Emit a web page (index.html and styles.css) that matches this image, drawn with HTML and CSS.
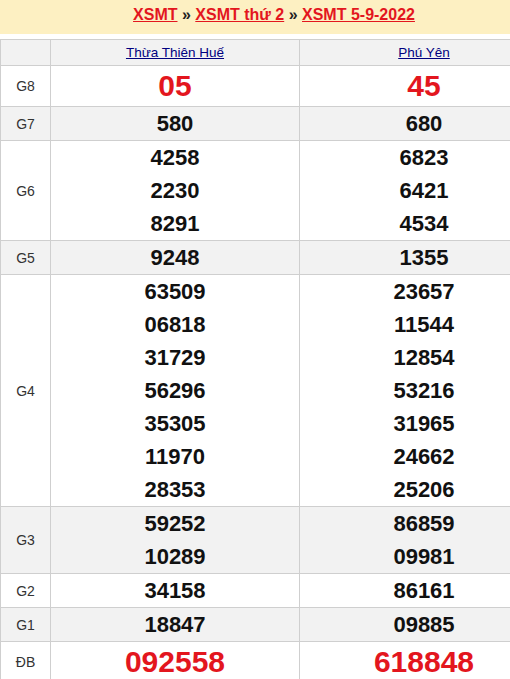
FILE: index.html
```html
<!DOCTYPE html>
<html lang="vi">
<head>
<meta charset="utf-8">
<link rel="stylesheet" href="styles.css">
</head>
<body>
<div class="page">
  <div class="crumbs">
    <a href="#">XSMT</a> » <a href="#">XSMT thứ 2</a> » <a href="#">XSMT 5-9-2022</a>
  </div>
  <table class="kq">
    <colgroup><col class="c-lbl"><col class="c-prov"><col class="c-prov"></colgroup>
    <thead>
      <tr class="alt"><th></th><th><a href="#">Thừa Thiên Huế</a></th><th><a href="#">Phú Yên</a></th></tr>
    </thead>
    <tbody>
      <tr class="g8"><td class="lbl">G8</td><td><div class="n big">05</div></td><td><div class="n big">45</div></td></tr>
      <tr class="alt"><td class="lbl">G7</td><td><div class="n">580</div></td><td><div class="n">680</div></td></tr>
      <tr><td class="lbl">G6</td><td><div class="n">4258</div><div class="n">2230</div><div class="n">8291</div></td><td><div class="n">6823</div><div class="n">6421</div><div class="n">4534</div></td></tr>
      <tr class="alt"><td class="lbl">G5</td><td><div class="n">9248</div></td><td><div class="n">1355</div></td></tr>
      <tr><td class="lbl">G4</td>
        <td><div class="n">63509</div><div class="n">06818</div><div class="n">31729</div><div class="n">56296</div><div class="n">35305</div><div class="n">11970</div><div class="n">28353</div></td>
        <td><div class="n">23657</div><div class="n">11544</div><div class="n">12854</div><div class="n">53216</div><div class="n">31965</div><div class="n">24662</div><div class="n">25206</div></td></tr>
      <tr class="alt"><td class="lbl">G3</td><td><div class="n">59252</div><div class="n">10289</div></td><td><div class="n">86859</div><div class="n">09981</div></td></tr>
      <tr><td class="lbl">G2</td><td><div class="n">34158</div></td><td><div class="n">86161</div></td></tr>
      <tr class="alt"><td class="lbl">G1</td><td><div class="n">18847</div></td><td><div class="n">09885</div></td></tr>
      <tr class="db"><td class="lbl">ĐB</td><td><div class="n big">092558</div></td><td><div class="n big">618848</div></td></tr>
    </tbody>
  </table>
</div>
</body>
</html>
```
FILE: styles.css
```css
html, body {
  margin: 0;
  padding: 0;
  background: #fff;
  overflow: hidden;
}
body {
  font-family: "Liberation Sans", Arial, sans-serif;
}
.page {
  width: 548px;
}
.crumbs {
  background: #fdf0c2;
  height: 34px;
  line-height: 30px;
  text-align: center;
  font-size: 16px;
  font-weight: bold;
  color: #222;
  margin-bottom: 5px;
}
.crumbs a {
  color: #e3161e;
  text-decoration: underline;
}
.kq {
  width: 548px;
  border-collapse: collapse;
  table-layout: fixed;
}
.c-lbl { width: 50px; }
.c-prov { width: 249px; }
.kq th, .kq td {
  border: 1px solid #cfcfcf;
  padding: 0;
  text-align: center;
  vertical-align: middle;
}
.kq th {
  height: 25px;
  font-weight: normal;
  font-size: 13.5px;
}
.kq th a {
  color: #000080;
  text-decoration: underline;
}
.kq tr.alt th, .kq tr.alt td {
  background: #f2f2f2;
}
.lbl {
  font-size: 14px;
  color: #333;
}
.n {
  font-size: 22px;
  font-weight: bold;
  color: #111;
  line-height: 33px;
}
.n.big {
  font-size: 30px;
  color: #e3161e;
  line-height: 40px;
}
```
